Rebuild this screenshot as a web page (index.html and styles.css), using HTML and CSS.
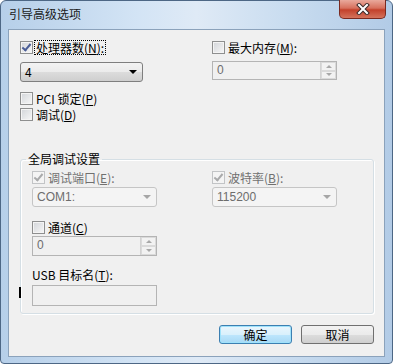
FILE: index.html
```html
<!DOCTYPE html>
<html>
<head>
  <meta charset="UTF-8">
  <title>引导高级选项</title>
  <link rel="stylesheet" href="styles.css">
</head>
<body>
  <div class="window">
    <div class="titlebar">
      <span class="title">引导高级选项</span>
      <span class="close">
        <svg width="14" height="12" viewBox="0 0 14 12">
          <path d="M3 2 L11 10 M11 2 L3 10" stroke="#3b2a2a" stroke-width="4" stroke-linecap="square"/>
          <path d="M3 2 L11 10 M11 2 L3 10" stroke="#ffffff" stroke-width="2" stroke-linecap="square"/>
        </svg>
      </span>
    </div>

    <div class="client">
      <div class="cols">
        <div class="col">
          <div class="check"><span class="box checked"></span><span class="label focus">处理器数(<u>N</u>):</span></div>
          <div class="combo cpu"><span>4</span><span class="arrow"></span></div>
          <div class="check pci"><span class="box"></span><span class="label">PCI 锁定(<u>P</u>)</span></div>
          <div class="check debug"><span class="box"></span><span class="label">调试(<u>D</u>)</span></div>
        </div>
        <div class="col">
          <div class="check"><span class="box"></span><span class="label">最大内存(<u>M</u>):</span></div>
          <div class="spin mem"><span>0</span><span class="spinbtn"><span class="up"></span><span class="down"></span></span></div>
        </div>
      </div>

      <fieldset class="group">
        <legend>全局调试设置</legend>
        <div class="cols inner">
          <div class="col">
            <div class="check off"><span class="box checked"></span><span class="label">调试端口(<u>E</u>):</span></div>
            <div class="combo off"><span>COM1:</span><span class="arrow"></span></div>
            <div class="check channel"><span class="box"></span><span class="label">通道(<u>C</u>)</span></div>
            <div class="spin chan"><span>0</span><span class="spinbtn"><span class="up"></span><span class="down"></span></span></div>
            <div class="field-label">USB 目标名(<u>T</u>):</div>
            <div class="textbox"></div>
          </div>
          <div class="col">
            <div class="check off"><span class="box checked"></span><span class="label">波特率(<u>B</u>):</span></div>
            <div class="combo off"><span>115200</span><span class="arrow"></span></div>
          </div>
        </div>
      </fieldset>

      <div class="buttons">
        <span class="btn default">确定</span>
        <span class="btn">取消</span>
      </div>

      <span class="caret"></span>
    </div>
  </div>
</body>
</html>
```

FILE: styles.css
```css
body {
  margin: 0;
  padding: 0;
  background: #ffffff;
  font-family: "Noto Sans CJK SC", "DejaVu Sans", sans-serif;
  font-size: 12px;
  color: #000000;
}
.window {
  width: 393px;
  height: 364px;
  box-sizing: border-box;
  border: 1px solid #4d6785;
  border-radius: 6px 6px 4px 4px;
  background: linear-gradient(to right, #b6cfe9, #d3e4f5 35%, #dfeaf6 50%, #c7dbef 75%, #b2cbe6);
  display: flex;
  flex-direction: column;
  position: relative;
}
.titlebar {
  height: 28px;
  display: flex;
  justify-content: space-between;
  align-items: flex-start;
}
.title {
  padding: 6px 0 0 8px;
  line-height: 14px;
  color: #1b1b1b;
}
.close {
  width: 47px;
  height: 19px;
  margin: -1px 6px 0 0;
  box-sizing: border-box;
  border: 1px solid #7a2a20;
  border-top: none;
  border-radius: 0 0 5px 5px;
  background: linear-gradient(to bottom, #e9a99c, #d7705d 45%, #c3412b 55%, #d4735c);
  display: flex;
  align-items: center;
  justify-content: center;
}
.client {
  flex: 1;
  margin: 0 7px 6px 7px;
  border: 1px solid #8ba2bb;
  background: #f0f0f0;
  padding: 11px 10px 0 11px;
  position: relative;
}
.cols {
  display: grid;
  grid-template-columns: 192px 1fr;
}
.col {
  display: flex;
  flex-direction: column;
  align-items: flex-start;
}
.check {
  display: flex;
  align-items: center;
  height: 13px;
  line-height: 13px;
}
.box {
  width: 13px;
  height: 13px;
  box-sizing: border-box;
  border: 1px solid #8e8f8f;
  background: linear-gradient(135deg, #d2d5d9, #f7f7f7);
  box-shadow: inset 0 0 0 1px #f4f4f4;
  margin-right: 2px;
  position: relative;
}
.box.checked::after {
  content: "";
  position: absolute;
  left: 3px;
  top: 0px;
  width: 3px;
  height: 7px;
  border-right: 2px solid #4a5d96;
  border-bottom: 2px solid #4a5d96;
  transform: rotate(40deg);
}
.check.off .box {
  border-color: #c2c4c6;
  background: #f4f4f4;
}
.check.off .box.checked::after {
  border-color: #a9aaab;
}
.check.off .label {
  color: #707070;
}
.label {
  padding: 0 1px;
}
.label.focus {
  outline: 1px dotted #000000;
  outline-offset: 0;
}
.combo {
  width: 123px;
  height: 20px;
  box-sizing: border-box;
  margin-top: 8px;
  border: 1px solid #7f7f7f;
  border-radius: 3px;
  background: linear-gradient(to bottom, #f3f3f3, #ebebeb 50%, #dcdcdc 51%, #cfcfcf);
  display: flex;
  align-items: center;
  justify-content: space-between;
  padding: 0 5px 0 4px;
  line-height: 18px;
}
.combo .arrow {
  width: 0;
  height: 0;
  border-left: 4px solid transparent;
  border-right: 4px solid transparent;
  border-top: 4px solid #000000;
}
.combo.off {
  width: 125px;
  margin-top: 3px;
  border-color: #c5c5c5;
  background: #f4f4f4;
  color: #6d6d6d;
  font-family: "Liberation Sans", "DejaVu Sans", sans-serif;
}
.combo.off .arrow {
  border-top-color: #a6a6a6;
}
.check.pci {
  margin-top: 10px;
}
.check.debug {
  margin-top: 3px;
}
.spin {
  width: 125px;
  height: 19px;
  box-sizing: border-box;
  border: 1px solid #b4b4b4;
  background: #f0f0f0;
  color: #6d6d6d;
  display: flex;
  justify-content: space-between;
  padding-left: 4px;
  line-height: 17px;
  font-family: "Liberation Sans", "DejaVu Sans", sans-serif;
}
.spin.mem {
  margin-top: 7px;
}
.spin.chan {
  margin-top: 2px;
  height: 20px;
}
.spinbtn {
  width: 15px;
  display: flex;
  flex-direction: column;
  border-left: 1px solid #d2d2d2;
}
.spinbtn .up,
.spinbtn .down {
  flex: 1;
  display: flex;
  align-items: center;
  justify-content: center;
  background: #f2f2f2;
  border: 1px solid #dadada;
}
.spinbtn .up::after {
  content: "";
  border-left: 3px solid transparent;
  border-right: 3px solid transparent;
  border-bottom: 3px solid #a8a8a8;
}
.spinbtn .down::after {
  content: "";
  border-left: 3px solid transparent;
  border-right: 3px solid transparent;
  border-top: 3px solid #a8a8a8;
}
.group {
  margin: 31px 0 0 0;
  padding: 5px 10px 7px 11px;
  border: 1px solid #d5dfe5;
  border-radius: 3px;
  box-shadow: inset 1px 1px 0 #ffffff, 1px 1px 0 #ffffff;
  width: 354px;
  box-sizing: border-box;
}
.group legend {
  padding: 0 2px;
  margin-left: -6px;
  line-height: 14px;
}
.cols.inner {
  grid-template-columns: 180px 1fr;
}
.check.channel {
  margin-top: 14px;
}
.field-label {
  margin-top: 12px;
  line-height: 13px;
}
.textbox {
  width: 125px;
  height: 21px;
  box-sizing: border-box;
  margin-top: 4px;
  border: 1px solid #b4b4b4;
  background: #f0f0f0;
}
.buttons {
  display: flex;
  justify-content: flex-end;
  gap: 9px;
  margin: 11px 0 0 0;
}
.btn {
  width: 73px;
  height: 19px;
  box-sizing: border-box;
  border: 1px solid #707070;
  border-radius: 3px;
  background: linear-gradient(to bottom, #f2f2f2, #ebebeb 50%, #dddddd 51%, #cfcfcf);
  text-align: center;
  line-height: 17px;
}
.btn.default {
  border-color: #3c7fb1;
  background: linear-gradient(to bottom, #eaf6fd, #d9f0fc 50%, #bee6fd 51%, #a7d9f5);
  box-shadow: inset 0 0 0 1px #9fe2fb;
}
.caret {
  position: absolute;
  left: 10px;
  top: 257px;
  width: 2px;
  height: 11px;
  background: #000000;
}
```
